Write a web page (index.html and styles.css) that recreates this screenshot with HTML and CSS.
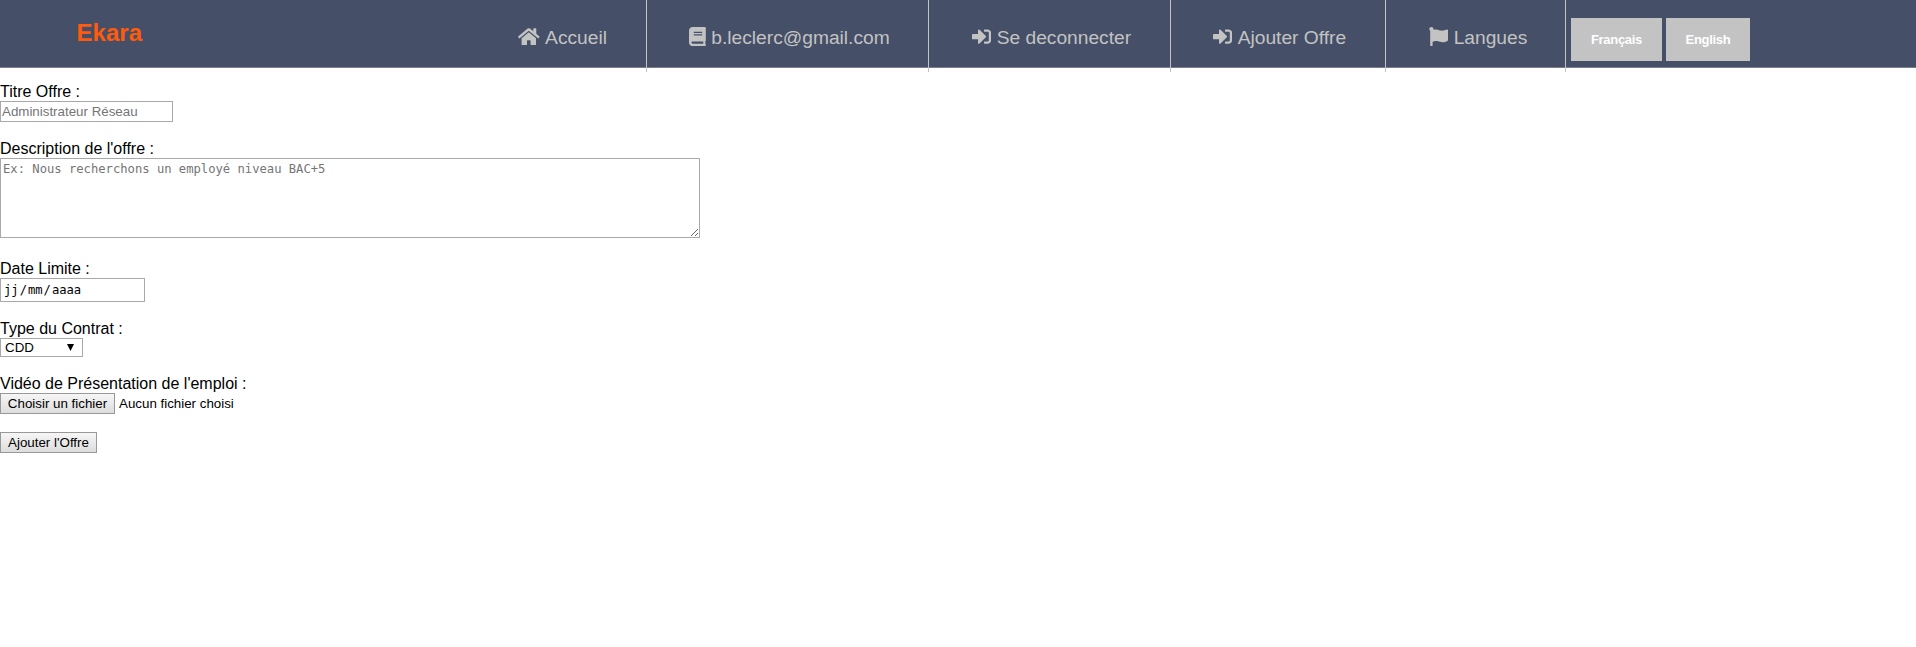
FILE: index.html
```html
<!DOCTYPE html>
<html lang="fr">
<head>
<meta charset="utf-8">
<title>Ekara</title>
<link rel="stylesheet" href="styles.css">
</head>
<body>
<header class="topbar">
  <a class="brand">Ekara</a>
  <nav class="menu">
    <a class="item home"><svg class="icon-home" viewBox="0 0 576 512"><path d="M280.37 148.26L96 300.11V464a16 16 0 0 0 16 16l112.06-.29a16 16 0 0 0 15.92-16V368a16 16 0 0 1 16-16h64a16 16 0 0 1 16 16v95.64a16 16 0 0 0 16 16.05L464 480a16 16 0 0 0 16-16V300L295.67 148.26a12.19 12.19 0 0 0-15.3 0zM571.6 251.47L488 182.56V44.05a12 12 0 0 0-12-12h-56a12 12 0 0 0-12 12v72.61L318.47 43a48 48 0 0 0-61 0L4.34 251.47a12 12 0 0 0-1.6 16.9l25.5 31A12 12 0 0 0 45.15 301l235.22-193.74a12.19 12.19 0 0 1 15.3 0L530.9 301a12 12 0 0 0 16.9-1.6l25.5-31a12 12 0 0 0-1.7-16.93z"/></svg><span>Accueil</span></a>
    <a class="item mail"><svg class="icon-book" viewBox="0 0 448 512"><path d="M448 360V24c0-13.300-10.700-24-24-24H96C43 0 0 43 0 96v320c0 53 43 96 96 96h328c13.300 0 24-10.700 24-24v-16c0-7.500-3.500-14.300-8.900-18.700-4.200-15.400-4.200-59.300 0-74.700 5.400-4.300 8.900-11.100 8.900-18.600zM128 134c0-3.300 2.700-6 6-6h212c3.300 0 6 2.700 6 6v20c0 3.300-2.700 6-6 6H134c-3.300 0-6-2.700-6-6v-20zm0 64c0-3.300 2.700-6 6-6h212c3.300 0 6 2.700 6 6v20c0 3.300-2.700 6-6 6H134c-3.300 0-6-2.700-6-6v-20zm253.400 250H96c-17.700 0-32-14.300-32-32 0-17.600 14.400-32 32-32h285.400c-1.900 17.100-1.900 46.900 0 64z"/></svg><span>b.leclerc@gmail.com</span></a>
    <a class="item logout"><svg class="icon-sign" viewBox="0 0 512 512"><path d="M416 448h-84c-6.600 0-12-5.400-12-12v-40c0-6.600 5.400-12 12-12h84c17.700 0 32-14.300 32-32V160c0-17.700-14.300-32-32-32h-84c-6.600 0-12-5.400-12-12V76c0-6.600 5.400-12 12-12h84c53 0 96 43 96 96v192c0 53-43 96-96 96zm-47-209L201 71c-15-15-41-4.500-41 17v96H24c-13.300 0-24 10.700-24 24v96c0 13.300 10.700 24 24 24h136v96c0 21.500 26 32 41 17l168-168c9.300-9.400 9.300-24.600 0-34z"/></svg><span>Se deconnecter</span></a>
    <a class="item add"><svg class="icon-sign" viewBox="0 0 512 512"><path d="M416 448h-84c-6.600 0-12-5.400-12-12v-40c0-6.600 5.400-12 12-12h84c17.700 0 32-14.300 32-32V160c0-17.700-14.300-32-32-32h-84c-6.600 0-12-5.400-12-12V76c0-6.600 5.400-12 12-12h84c53 0 96 43 96 96v192c0 53-43 96-96 96zm-47-209L201 71c-15-15-41-4.500-41 17v96H24c-13.300 0-24 10.700-24 24v96c0 13.300 10.700 24 24 24h136v96c0 21.500 26 32 41 17l168-168c9.300-9.400 9.300-24.600 0-34z"/></svg><span>Ajouter Offre</span></a>
    <a class="item lang"><svg class="icon-sign" viewBox="0 0 512 512"><path d="M349.565 98.783C295.978 98.783 251.721 64 184.348 64c-24.955 0-47.309 4.384-68.045 12.013a55.947 55.947 0 0 0 3.586-23.562C118.117 24.015 94.806 1.206 66.338.048 34.345-1.254 8 24.296 8 56c0 19.026 9.497 35.825 24 45.945V488c0 13.255 10.745 24 24 24h16c13.255 0 24-10.745 24-24v-94.400c28.311-12.064 63.582-22.122 114.435-22.122 53.588 0 97.844 34.783 165.217 34.783 48.169 0 86.667-16.294 122.505-40.858C506.840 359.452 512 349.571 512 339.045v-243.100c0-23.393-24.269-38.870-45.485-29.016-34.338 15.948-76.454 31.854-116.950 31.854z"/></svg><span>Langues</span></a>
    <div class="languages">
      <button class="lang-btn french">Français</button>
      <button class="lang-btn english">English</button>
    </div>
  </nav>
</header>
<main class="offer-form">
  <label>Titre Offre :</label>
  <input class="title-input" type="text" placeholder="Administrateur Réseau">
  <label>Description de l'offre :</label>
  <textarea class="description" placeholder="Ex: Nous recherchons un employé niveau BAC+5"></textarea>
  <label>Date Limite :</label>
  <div class="date-input"><span>jj</span><span>/</span><span>mm</span><span>/</span><span>aaaa</span></div>
  <label>Type du Contrat :</label>
  <div class="contract"><span>CDD</span><svg class="arrow" viewBox="0 0 8 8"><path d="M0 0h8L4 8z"/></svg></div>
  <label>Vidéo de Présentation de l'emploi :</label>
  <div class="file-row"><button class="btn file-btn">Choisir un fichier</button><span class="file-name">Aucun fichier choisi</span></div>
  <button class="btn submit">Ajouter l'Offre</button>
</main>
</body>
</html>
```
FILE: styles.css
```css
* { box-sizing: border-box; }

body {
  margin: 0;
  background: #fff;
  color: #000;
  font: 16px/18px "Liberation Sans", Arial, sans-serif;
}

/* Navigation bar */
.topbar {
  display: flex;
  height: 68px;
  background: #454f67;
  border-bottom: 1px solid #7b7f8c;
}
.brand {
  width: 510px;
  padding: 19px 0 0 76.6px;
  color: #ff5b0c;
  font-size: 24px;
  line-height: 28px;
  font-weight: bold;
}
.menu { display: flex; height: 72px; color: #c3c3c3; }
.item {
  display: flex;
  height: 72px;
  padding: 27px 0 0 43px;
  border-right: 1px solid #c3c3c3;
  font-size: 19.2px;
  line-height: 22px;
  white-space: nowrap;
}
.item svg { flex: none; fill: currentColor; height: 19.2px; }
.item span { margin-left: 5.5px; }
.home { width: 137px; padding-left: 8px; }
.mail { width: 282px; padding-left: 42px; }
.logout { width: 242px; }
.add { width: 215px; padding-left: 42px; }
.lang { width: 180px; }
.icon-home { width: 21.6px; }
.icon-book { width: 16.8px; }
.icon-sign { width: 19.2px; }
.languages { display: flex; align-items: flex-start; gap: 4px; padding: 18px 0 0 5px; }
.lang-btn {
  height: 43px;
  padding: 0;
  border: 0;
  background: #c3c3c3;
  color: #fff;
  font: bold 13px "Liberation Sans", Arial, sans-serif;
  letter-spacing: -0.3px;
}
.french { width: 91px; }
.english { width: 84px; }

/* Offer form */
.offer-form { display: flex; flex-direction: column; align-items: flex-start; padding-top: 15px; }
.title-input {
  width: 173px;
  height: 21px;
  margin-bottom: 18px;
  padding: 1px;
  border: 1px solid #a9a9a9;
  font: 13.333px "Liberation Sans", Arial, sans-serif;
}
::placeholder { color: #757575; }
.description {
  width: 700px;
  height: 80px;
  margin-bottom: 22px;
  padding: 3px 2px 2px;
  border: 1px solid #a9a9a9;
  font: 12.18px/15px "DejaVu Sans Mono", monospace;
}
.date-input {
  display: flex;
  gap: 1px;
  width: 145px;
  height: 24px;
  margin-bottom: 18px;
  padding: 2px 3px;
  border: 1px solid #a9a9a9;
  font: 12.15px/18px "DejaVu Sans Mono", monospace;
}
.contract {
  display: flex;
  align-items: center;
  justify-content: space-between;
  width: 83px;
  height: 19px;
  margin-bottom: 18px;
  padding: 0 8px 0 4px;
  border: 1px solid #a9a9a9;
  font-size: 13.333px;
  line-height: 17px;
}
.arrow { width: 7px; height: 7px; }
.file-row { display: flex; height: 21px; margin-bottom: 18px; font-size: 13.333px; line-height: 21px; }
.file-name { margin-left: 4px; }
.btn {
  height: 21px;
  padding: 0;
  border: 1px solid #999;
  background: linear-gradient(#f6f6f6, #dddddd);
  color: #000;
  font: 13.333px "Liberation Sans", Arial, sans-serif;
  white-space: nowrap;
}
.file-btn { width: 115px; }
.submit { width: 97px; }
```
